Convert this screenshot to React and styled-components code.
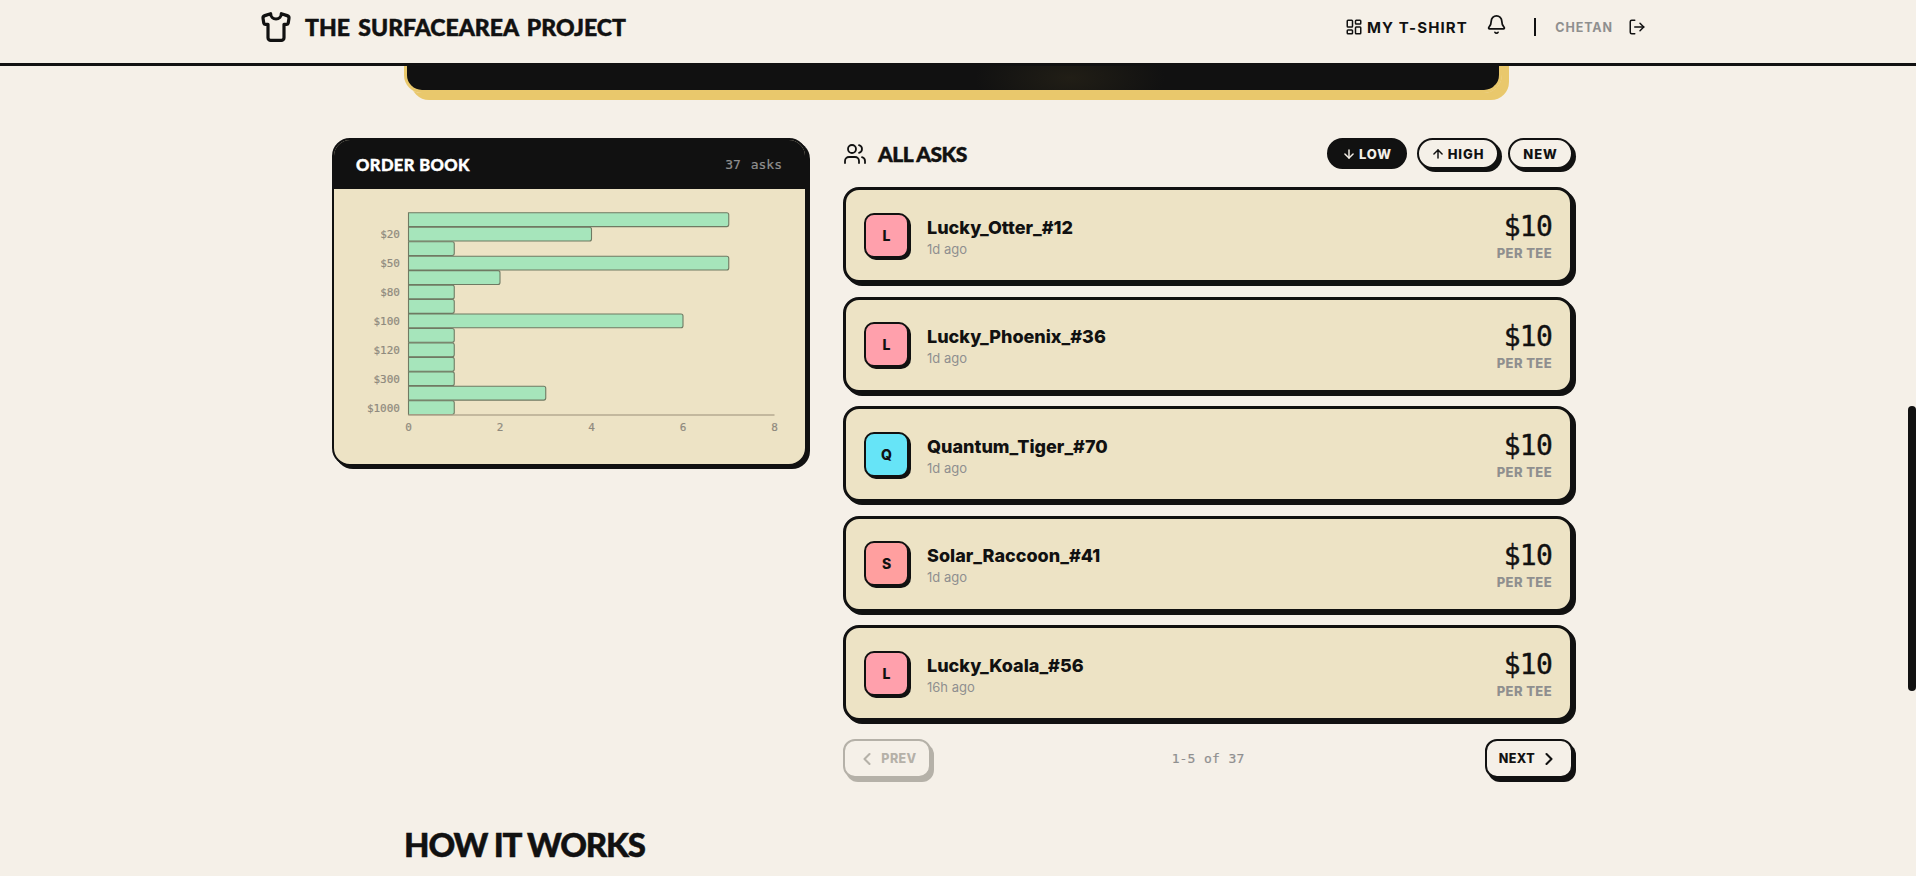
import React from "react";
import styled, { createGlobalStyle } from "styled-components";
import { ArrowDown, ArrowUp, Bell, ChevronLeft, ChevronRight, LayoutDashboard, LogOut, Shirt, Users } from "lucide-react";

const INK = "#111111";
const PAPER = "#f5f0e8";
const SAND = "#ede3c5";
const GOLD = "#e9c86c";
const HEADING = '"Lato", "Liberation Sans", sans-serif';
const BODY = '"Inter", "Liberation Sans", sans-serif';
const MONO = '"DejaVu Sans Mono", "Liberation Mono", monospace';

const GlobalStyle = createGlobalStyle`
  html, body {
    margin: 0;
    height: 876px;
    overflow: hidden;
    background: ${PAPER};
    color: ${INK};
    font-family: ${BODY};
  }
  * { box-sizing: border-box; }
`;

const Page = styled.div`
  height: 876px;
  overflow: hidden;
  position: relative;
`;

const Header = styled.header`
  height: 66px;
  border-bottom: 3px solid ${INK};
  padding: 0 270px 0 260px;
  display: flex;
  align-items: center;
  justify-content: space-between;
`;

const Brand = styled.div`
  display: flex;
  align-items: center;
  gap: 13px;
  margin-bottom: 9px;
`;

const BrandName = styled.span`
  font-family: ${HEADING};
  font-weight: 900;
  font-size: 23px;
  word-spacing: 3px;
  -webkit-text-stroke: 0.5px ${INK};
`;

const HeaderNav = styled.nav`
  display: flex;
  align-items: center;
  margin-bottom: 9px;
`;

const NavLink = styled.span`
  display: flex;
  align-items: center;
  gap: 4px;
  font-weight: 700;
  font-size: 15px;
  letter-spacing: 1.1px;
`;

const BellIcon = styled(Bell)`
  margin: 0 0 6px 18px;
`;

const Divider = styled.span`
  width: 2px;
  height: 18px;
  background: ${INK};
  margin: 0 19px 0 27.5px;
`;

const UserName = styled.span`
  font-weight: 700;
  font-size: 12.5px;
  letter-spacing: 0.9px;
  color: #8f8f8f;
  margin-right: 15px;
`;

const HeroPanel = styled.div`
  width: 1098px;
  height: 27px;
  margin-left: 404px;
  background: radial-gradient(ellipse 95px 40px at 60.7% 50%, #211e16, ${INK});
  border: 3px solid ${GOLD};
  border-top: 0;
  border-radius: 0 0 18px 18px;
  box-shadow: 7px 0 0 ${GOLD}, 7px 7px 0 ${GOLD};
`;

const Columns = styled.main`
  display: grid;
  grid-template-columns: 475px 730px;
  gap: 36px;
  padding: 45px 0 0 332px;
  align-items: start;
`;

const BookCard = styled.section`
  height: 328px;
  background: ${SAND};
  border: 2px solid ${INK};
  border-radius: 18px;
  box-shadow: 3px 3px 0 ${INK};
  overflow: hidden;
`;

const BookHeader = styled.div`
  height: 49px;
  background: ${INK};
  padding: 0 23px 0 22px;
  display: flex;
  align-items: center;
  justify-content: space-between;
`;

const BookTitle = styled.span`
  font-family: ${HEADING};
  font-weight: 900;
  font-size: 16.5px;
  color: #fff;
  letter-spacing: 0.4px;
  -webkit-text-stroke: 0.4px #fff;
`;

const BookCount = styled.span`
  font-family: ${MONO};
  font-size: 13px;
  color: #8f8f8f;
  word-spacing: 2px;
  -webkit-text-stroke: 0.2px #8f8f8f;
`;

const ChartSvg = styled.svg`
  display: block;
`;

const AsksColumn = styled.section`
  display: flex;
  flex-direction: column;
`;

const AsksHeader = styled.div`
  height: 31px;
  display: flex;
  align-items: center;
  justify-content: space-between;
  margin-bottom: 18px;
`;

const AsksTitle = styled.h2`
  margin: 0;
  display: flex;
  align-items: center;
  gap: 11px;
  font-family: ${HEADING};
  font-weight: 900;
  font-size: 21px;
  letter-spacing: -0.5px;
  -webkit-text-stroke: 0.5px ${INK};
`;

const SortRow = styled.div`
  display: flex;
  gap: 9.5px;
`;

const SortButton = styled.button`
  width: ${(p) => p.$width}px;
  height: 31px;
  padding: 0;
  display: flex;
  align-items: center;
  justify-content: center;
  gap: 3px;
  border: 2px solid ${INK};
  border-radius: 16px;
  background: ${(p) => (p.$active ? INK : PAPER)};
  color: ${(p) => (p.$active ? PAPER : INK)};
  box-shadow: ${(p) => (p.$active ? "none" : `3px 3px 0 ${INK}`)};
  font-family: ${BODY};
  font-weight: 800;
  font-size: 13px;
  letter-spacing: 0.9px;
`;

const AskList = styled.div`
  display: flex;
  flex-direction: column;
  gap: 13.5px;
`;

const AskRow = styled.article`
  height: 96px;
  background: ${SAND};
  border: 3px solid ${INK};
  border-radius: 16px;
  box-shadow: 3px 3px 0 ${INK};
  padding: 0 18px;
  display: flex;
  align-items: center;
  gap: 18px;
`;

const Avatar = styled.div`
  width: 45px;
  height: 45px;
  flex: none;
  display: flex;
  align-items: center;
  justify-content: center;
  background: ${(p) => p.$color};
  border: 2px solid ${INK};
  border-radius: 10px;
  box-shadow: 2px 2px 0 ${INK};
  font-weight: 800;
  font-size: 14px;
`;

const AskInfo = styled.div`
  flex: 1;
  padding-top: 5px;
`;

const AskName = styled.div`
  font-weight: 800;
  font-size: 18px;
  line-height: 23px;
`;

const AskTime = styled.div`
  font-size: 13px;
  line-height: 21px;
  color: #8f8f8f;
`;

const AskPrice = styled.div`
  text-align: right;
  padding-top: 2px;
`;

const PriceValue = styled.div`
  font-family: ${MONO};
  font-size: 28px;
  line-height: 33px;
  letter-spacing: -0.8px;
  -webkit-text-stroke: 0.4px ${INK};
`;

const PriceUnit = styled.div`
  margin-top: 1px;
  font-weight: 800;
  font-size: 13px;
  line-height: 18px;
  letter-spacing: 0.4px;
  color: #8f8f8f;
`;

const Pager = styled.div`
  margin-top: 18px;
  height: 39px;
  display: flex;
  align-items: center;
  justify-content: space-between;
`;

const PagerButton = styled.button`
  width: 88px;
  height: 39px;
  padding: 0;
  display: flex;
  align-items: center;
  justify-content: center;
  gap: 4px;
  background: ${PAPER};
  border: 2px solid ${(p) => (p.disabled ? "#b5b1a8" : INK)};
  border-radius: 12px;
  box-shadow: 3px 4px 0 ${(p) => (p.disabled ? "#b5b1a8" : INK)};
  color: ${(p) => (p.disabled ? "#b5b1a8" : INK)};
  font-family: ${BODY};
  font-weight: 800;
  font-size: 12.5px;
  letter-spacing: 0.4px;
`;

const PageInfo = styled.span`
  font-family: ${MONO};
  font-size: 13px;
  color: #8f8f8f;
  word-spacing: 1px;
  -webkit-text-stroke: 0.2px #8f8f8f;
`;

const HowItWorks = styled.h2`
  margin: 45px 0 0 404px;
  font-family: ${HEADING};
  font-weight: 900;
  font-size: 33px;
  letter-spacing: -1.15px;
  line-height: 42px;
  -webkit-text-stroke: 0.5px ${INK};
`;

const ScrollThumb = styled.div`
  position: absolute;
  top: 406px;
  right: 0;
  width: 8px;
  height: 285px;
  background: ${INK};
  border-radius: 4px;
`;

const ChartLabel = styled.text`
  font-family: ${MONO};
  font-size: 11px;
  fill: #8f8a7e;
  stroke: #8f8a7e;
  stroke-width: 0.2px;
`;

const asks = [
  { id: 1, name: "Lucky_Otter_#12", time: "1d ago", color: "#ffa0ac", initial: "L" },
  { id: 2, name: "Lucky_Phoenix_#36", time: "1d ago", color: "#ffa0ac", initial: "L" },
  { id: 3, name: "Quantum_Tiger_#70", time: "1d ago", color: "#66e4f7", initial: "Q" },
  { id: 4, name: "Solar_Raccoon_#41", time: "1d ago", color: "#ff9f9f", initial: "S" },
  { id: 5, name: "Lucky_Koala_#56", time: "16h ago", color: "#ffa0ac", initial: "L" },
];

const bars = [7, 4, 1, 7, 2, 1, 1, 6, 1, 1, 1, 1, 3, 1];
const priceTicks = { 1: "$20", 3: "$50", 5: "$80", 7: "$100", 9: "$120", 11: "$300", 13: "$1000" };

// square on the axis side, rounded on the far end
const barPath = (x, y, w, h, r = 2) =>
  `M${x} ${y}h${w - r}a${r} ${r} 0 0 1 ${r} ${r}v${h - 2 * r}a${r} ${r} 0 0 1 ${-r} ${r}h${r - w}z`;

function OrderChart() {
  const left = 74.5;
  const unit = 45.75;
  const top = 23.5;
  const step = 14.46;
  const axisY = top + 14 * step;
  return (
    <ChartSvg width="471" height="275" viewBox="0 0 471 275">
      {bars.map((count, i) => (
        <path
          key={i}
          d={barPath(left, top + i * step + 0.3, count * unit, 13.8)}
          fill="#a6e5bb"
          stroke="#6f7a63"
          strokeWidth="1.1"
        />
      ))}
      {Object.entries(priceTicks).map(([i, label]) => (
        <ChartLabel key={label} x={left - 8.5} y={top + (Number(i) + 0.5) * step + 4} textAnchor="end">
          {label}
        </ChartLabel>
      ))}
      <line x1={left} y1={axisY} x2={left + 366} y2={axisY} stroke="#b5aa90" strokeWidth="1.4" />
      {[0, 2, 4, 6, 8].map((tick) => (
        <ChartLabel key={tick} x={left + tick * unit} y={axisY + 16.5} textAnchor="middle">
          {tick}
        </ChartLabel>
      ))}
    </ChartSvg>
  );
}

export default function App() {
  return (
    <Page>
      <GlobalStyle />
      <Header>
        <Brand>
          <Shirt size={32} strokeWidth={2.4} />
          <BrandName>THE SURFACEAREA PROJECT</BrandName>
        </Brand>
        <HeaderNav>
          <NavLink>
            <LayoutDashboard size={18} strokeWidth={2} />
            MY T-SHIRT
          </NavLink>
          <BellIcon size={21} strokeWidth={2} />
          <Divider />
          <UserName>CHETAN</UserName>
          <LogOut size={18} strokeWidth={2} />
        </HeaderNav>
      </Header>
      <HeroPanel />
      <Columns>
        <BookCard>
          <BookHeader>
            <BookTitle>ORDER BOOK</BookTitle>
            <BookCount>37 asks</BookCount>
          </BookHeader>
          <OrderChart />
        </BookCard>
        <AsksColumn>
          <AsksHeader>
            <AsksTitle>
              <Users size={24} strokeWidth={1.8} />
              ALL ASKS
            </AsksTitle>
            <SortRow>
              <SortButton $active $width={80}>
                <ArrowDown size={14} strokeWidth={2.5} />
                LOW
              </SortButton>
              <SortButton $width={82}>
                <ArrowUp size={14} strokeWidth={2.5} />
                HIGH
              </SortButton>
              <SortButton $width={65}>NEW</SortButton>
            </SortRow>
          </AsksHeader>
          <AskList>
            {asks.map((ask) => (
              <AskRow key={ask.id}>
                <Avatar $color={ask.color}>{ask.initial}</Avatar>
                <AskInfo>
                  <AskName>{ask.name}</AskName>
                  <AskTime>{ask.time}</AskTime>
                </AskInfo>
                <AskPrice>
                  <PriceValue>$10</PriceValue>
                  <PriceUnit>PER TEE</PriceUnit>
                </AskPrice>
              </AskRow>
            ))}
          </AskList>
          <Pager>
            <PagerButton disabled>
              <ChevronLeft size={20} strokeWidth={2.5} />
              PREV
            </PagerButton>
            <PageInfo>1-5 of 37</PageInfo>
            <PagerButton>
              NEXT
              <ChevronRight size={20} strokeWidth={2.5} />
            </PagerButton>
          </Pager>
        </AsksColumn>
      </Columns>
      <HowItWorks>HOW IT WORKS</HowItWorks>
      <ScrollThumb />
    </Page>
  );
}
